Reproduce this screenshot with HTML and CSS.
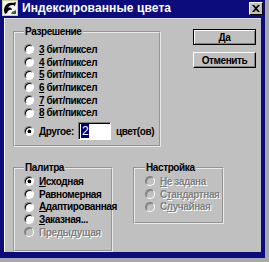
FILE: index.html
```html
<!DOCTYPE html>
<html lang="ru">
<head>
  <meta charset="UTF-8">
  <title>Индексированные цвета</title>
  <link rel="stylesheet" href="styles.css">
</head>
<body>
  <div class="window">
    <div class="titlebar">
      <svg class="app-icon" width="16" height="16" viewBox="0 0 16 16">
        <rect x="0" y="0" width="16" height="16" fill="#c8d0a0"/>
        <rect x="1" y="1" width="14" height="14" fill="#f4f4f4"/>
        <path d="M2 11 C2 5 6 2 11 3 L14 2 L13 6 C11 4 7 5 6 8 C8 7 10 8 10 10 C8 9 6 10 5 13 L3 14 Z" fill="#000"/>
        <path d="M10 12 L14 10 L14 14 L9 14 Z" fill="#2a6a2a"/>
      </svg>
      <span class="title">Индексированные цвета</span>
      <span class="close">
        <svg width="8" height="7" viewBox="0 0 8 7">
          <path d="M0 0h2l2 2 2-2h2L5 3.5 8 7H6L4 5 2 7H0l3-3.5z" fill="#000"/>
        </svg>
      </span>
    </div>

    <div class="client">
      <div class="row">
        <fieldset class="group res">
          <legend>Разрешение</legend>
          <div class="opts">
            <label class="opt"><input type="radio" name="res"><span><u>3</u> бит/пиксел</span></label>
            <label class="opt"><input type="radio" name="res"><span><u>4</u> бит/пиксел</span></label>
            <label class="opt"><input type="radio" name="res"><span><u>5</u> бит/пиксел</span></label>
            <label class="opt"><input type="radio" name="res"><span><u>6</u> бит/пиксел</span></label>
            <label class="opt"><input type="radio" name="res"><span><u>7</u> бит/пиксел</span></label>
            <label class="opt"><input type="radio" name="res"><span><u>8</u> бит/пиксел</span></label>
          </div>
          <div class="other">
            <label class="opt"><input type="radio" name="res" checked><span><u>Д</u>ругое:</span></label>
            <span class="field"><span class="sel">2</span></span>
            <span>цвет(ов)</span>
          </div>
        </fieldset>

        <div class="buttons">
          <button class="btn default">Да</button>
          <button class="btn">Отменить</button>
        </div>
      </div>

      <div class="row lower">
        <fieldset class="group pal">
          <legend>Палитра</legend>
          <div class="opts">
            <label class="opt"><input type="radio" name="pal" checked><span><u>И</u>сходная</span></label>
            <label class="opt"><input type="radio" name="pal"><span>Равномерная</span></label>
            <label class="opt"><input type="radio" name="pal"><span><u>А</u>даптированная</span></label>
            <label class="opt"><input type="radio" name="pal"><span><u>З</u>аказная...</span></label>
            <label class="opt off"><input type="radio" name="pal" disabled><span>Предыдущая</span></label>
          </div>
        </fieldset>

        <fieldset class="group set">
          <legend>Настройка</legend>
          <div class="opts">
            <label class="opt off"><input type="radio" name="set" disabled><span><u>Н</u>е задана</span></label>
            <label class="opt off"><input type="radio" name="set" disabled><span>С<u>т</u>андартная</span></label>
            <label class="opt off"><input type="radio" name="set" disabled><span>С<u>л</u>учайная</span></label>
          </div>
        </fieldset>
      </div>
    </div>
  </div>
</body>
</html>
```

FILE: styles.css
```css
body {
  margin: 0;
  background: #a8a8a8;
  font-family: "Liberation Sans", Arial, sans-serif;
  font-size: 10px;
  font-weight: bold;
  letter-spacing: -0.4px;
  color: #000;
}
.window {
  width: 265px;
  height: 258px;
  box-sizing: border-box;
  background: #0c0c7c;
  padding-bottom: 6px;
  display: flex;
  flex-direction: column;
}
.titlebar {
  height: 17px;
  display: flex;
  align-items: center;
  padding: 0 2px;
}
.app-icon {
  flex: none;
}
.title {
  margin-left: 4px;
  color: #fff;
  font-size: 12px;
  letter-spacing: 0.1px;
  flex: 1;
}
.close {
  width: 14px;
  height: 13px;
  box-sizing: border-box;
  background: #c0c0c0;
  border: 1px solid;
  border-color: #fff #000 #000 #fff;
  display: flex;
  align-items: center;
  justify-content: center;
}
.client {
  flex: 1;
  margin: 2px 4px 0 4px;
  background: #c0c0c0;
  border-left: 1px solid #fff;
  border-top: 1px solid #e0e0e0;
  padding: 7px 0 0 8px;
}
.row {
  display: flex;
  align-items: flex-start;
}
.lower {
  margin-top: 15px;
}
.group {
  flex: none;
  margin: 0;
  padding: 0 0 0 9px;
  border: 2px groove #e8e8e8;
  box-sizing: border-box;
  min-inline-size: 0;
}
.group legend {
  padding: 0 1px;
  line-height: 12px;
}
.res {
  width: 148px;
  height: 121px;
}
.pal {
  width: 100px;
  height: 90px;
}
.set {
  width: 91px;
  height: 62px;
  margin-left: 20px;
  padding-left: 10px;
}
.opts {
  display: flex;
  flex-direction: column;
  margin-top: 5px;
}
.pal .opts,
.set .opts {
  margin-top: 1px;
}
.opt {
  height: 12.7px;
  display: flex;
  align-items: center;
  gap: 5px;
  white-space: nowrap;
}
.opt input {
  flex: none;
  appearance: none;
  margin: 0;
  width: 10px;
  height: 10px;
  border-radius: 50%;
  border: 1px solid;
  border-color: #808080 #fff #fff #808080;
  box-shadow: inset 1px 1px 0 #000;
  background: #fff;
  box-sizing: border-box;
}
.opt input:checked {
  background: radial-gradient(circle at 55% 55%, #000 0 1.6px, #fff 2.2px);
}
.opt input:disabled {
  background: #c0c0c0;
  box-shadow: inset 1px 1px 0 #808080;
}
.off span {
  color: #808080;
  text-shadow: 1px 1px 0 #fff;
}
.other {
  display: flex;
  align-items: center;
  gap: 5px;
  margin-top: 3px;
  height: 18px;
}
.field {
  width: 33px;
  height: 18px;
  box-sizing: border-box;
  background: #fff;
  border: 1px solid;
  border-color: #808080 #fff #fff #808080;
  box-shadow: inset 1px 1px 0 #000;
  padding: 3px 0 0 2px;
  font-size: 12px;
  font-weight: normal;
  line-height: 11px;
  margin-left: -1px;
}
.sel {
  background: #000080;
  color: #fff;
  padding: 0 1px;
}
.buttons {
  margin-left: 32px;
  margin-top: 3px;
  display: flex;
  flex-direction: column;
  gap: 7px;
}
.btn {
  width: 63px;
  height: 16px;
  padding: 0;
  font: inherit;
  letter-spacing: inherit;
  color: #000;
  background: #c0c0c0;
  border: 1px solid;
  border-color: #fff #000 #000 #fff;
  box-shadow: inset -1px -1px 0 #808080;
}
.btn.default {
  border-color: #000;
  box-shadow: inset 1px 1px 0 #fff, inset -1px -1px 0 #808080;
}
```
